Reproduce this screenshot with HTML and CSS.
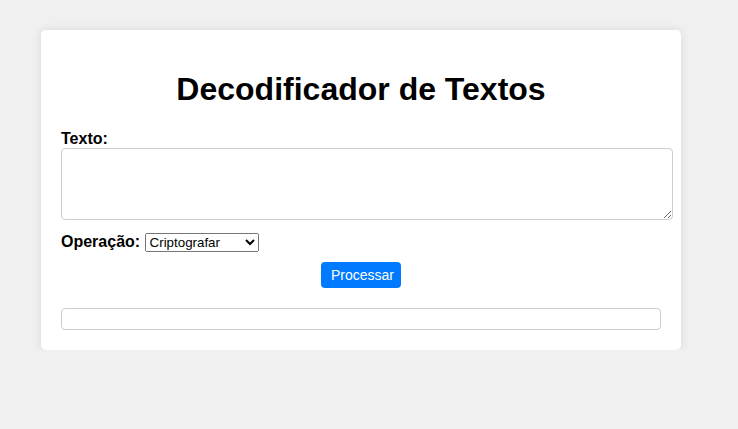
FILE: index.html
```
<!DOCTYPE html>
<html lang="pt">
<head>
<meta charset="utf-8">
<title>Decodificador de Textos</title>
<link rel="stylesheet" href="styles.css">
</head>
<body>
<div class="card">
  <h1 class="title">Decodificador de Textos</h1>
  <label class="label-block" for="texto">Texto:</label>
  <textarea id="texto" class="text-input"></textarea>
  <div class="op-row">
    <label class="label" for="op">Operação:</label>
    <select id="op" class="select">
      <option>Criptografar</option>
      <option>Descriptografar</option>
    </select>
  </div>
  <div class="btn-row">
    <button class="btn">Processar</button>
  </div>
  <div class="result"></div>
</div>
</body>
</html>
```
FILE: styles.css
```
html, body {
  margin: 0;
  padding: 0;
}
body {
  background: #f0f0f0;
  font-family: "Liberation Sans", Arial, sans-serif;
  padding-top: 30px;
  padding-left: 41px;
}
.card {
  width: 600px;
  padding: 20px;
  background: #fff;
  border-radius: 5px;
  box-shadow: 0 0 10px rgba(0,0,0,0.1);
}
.title {
  font-size: 32px;
  text-align: center;
  margin: 21.44px 0;
}
.label-block {
  display: block;
  font-weight: bold;
  font-size: 16px;
}
.label {
  font-weight: bold;
  font-size: 16px;
}
.text-input {
  display: block;
  height: 72px;
  padding: 5px;
  border: 1px solid #ccc;
  border-radius: 4px;
  margin: 0;
  box-sizing: border-box;
  width: 612px;
}
.op-row {
  margin-top: 13px;
}
.select {
  width: 114px;
  font-family: "Liberation Sans", Arial, sans-serif;
  font-size: 13.33px;
}
.btn-row {
  display: flex;
  justify-content: center;
  margin-top: 10px;
}
.btn {
  background: #007bff;
  color: #fff;
  border: none;
  border-radius: 4px;
  padding: 5px 10px;
  height: 26px;
  width: 80px;
  font-family: "Liberation Sans", Arial, sans-serif;
  font-size: 14px;
}
.result {
  margin-top: 20px;
  padding: 10px;
  border: 1px solid #ccc;
  border-radius: 4px;
}
```
